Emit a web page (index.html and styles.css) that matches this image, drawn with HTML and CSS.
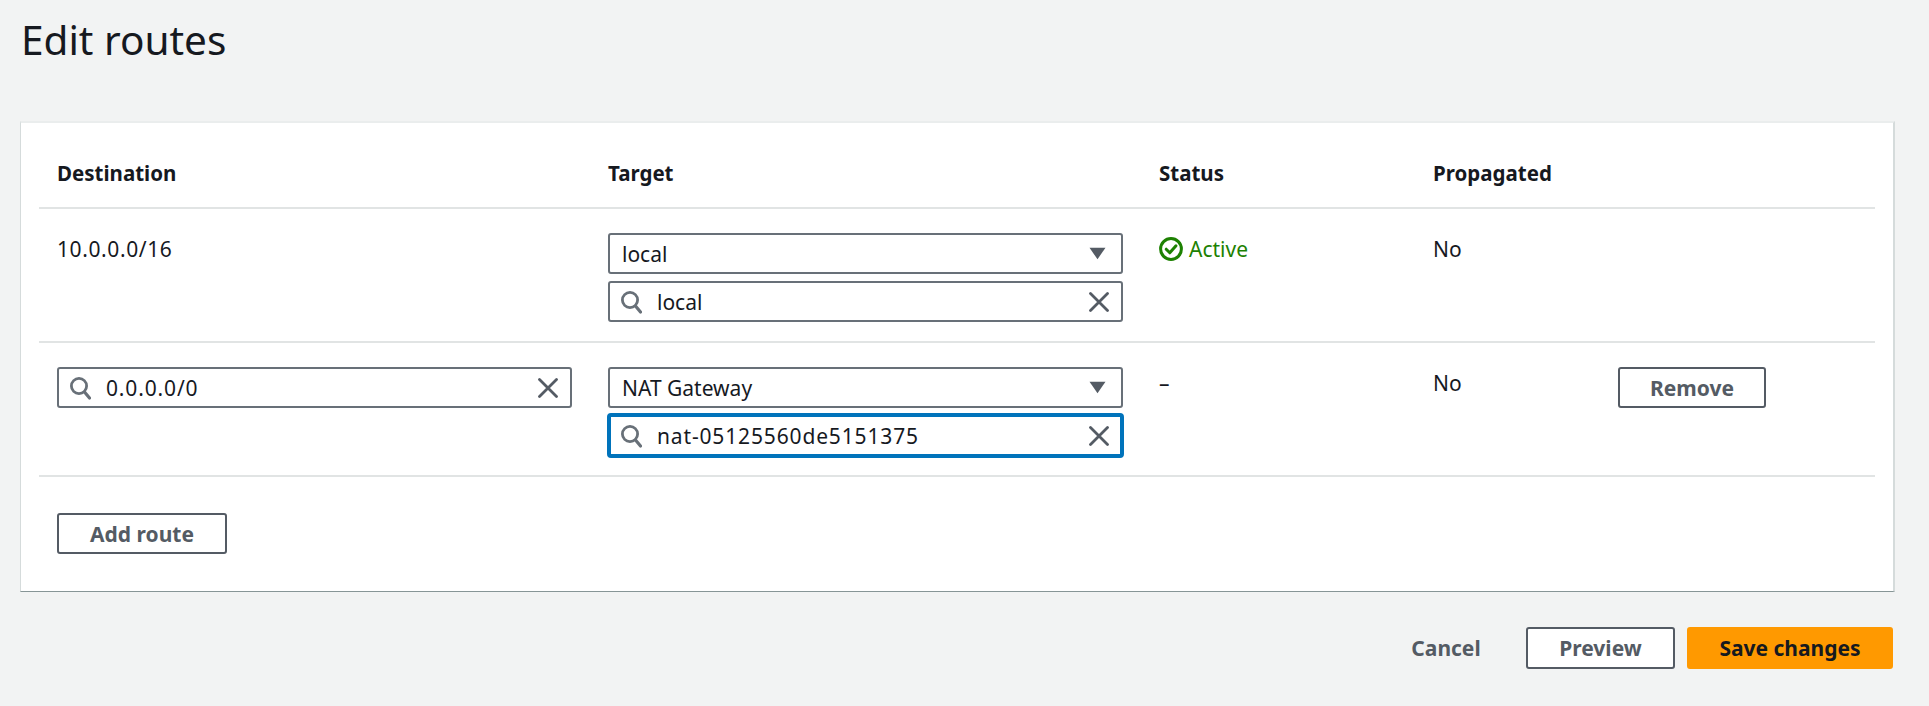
FILE: index.html
```html
<!DOCTYPE html>
<html lang="en">
<head>
<meta charset="utf-8">
<title>Edit routes</title>
<link rel="stylesheet" href="styles.css">
</head>
<body>
<svg class="defs" width="0" height="0" aria-hidden="true">
  <symbol id="i-search" viewBox="0 0 22 24"><circle cx="10" cy="10" r="7.6" fill="none" stroke="currentColor" stroke-width="2.8"/><path d="M15.5 16 L20.5 22" fill="none" stroke="currentColor" stroke-width="3.2" stroke-linecap="round"/></symbol>
  <symbol id="i-close" viewBox="0 0 20 20"><path d="M1.5 1.5 L18.5 18.5 M18.5 1.5 L1.5 18.5" fill="none" stroke="currentColor" stroke-width="2.8" stroke-linecap="round"/></symbol>
  <symbol id="i-caret" viewBox="0 0 16 12"><path d="M0.5 0.5 H15.5 L8 11.5 Z" fill="currentColor"/></symbol>
  <symbol id="i-check" viewBox="0 0 24 24"><circle cx="12" cy="12" r="10.4" fill="none" stroke="currentColor" stroke-width="3"/><path d="M7.2 12.2 L10.8 15.8 L17 8.8" fill="none" stroke="currentColor" stroke-width="3" stroke-linecap="round" stroke-linejoin="round"/></symbol>
</svg>
<main class="page">
  <h1 class="title">Edit routes</h1>
  <section class="card">
    <div class="row head">
      <div class="cell">Destination</div>
      <div class="cell">Target</div>
      <div class="cell">Status</div>
      <div class="cell">Propagated</div>
      <div class="cell"></div>
    </div>
    <div class="row">
      <div class="cell text"><span class="num">10.0.0.0/16</span></div>
      <div class="cell stack">
        <div class="field select"><span class="value">local</span><svg class="caret"><use href="#i-caret"/></svg></div>
        <div class="field"><svg class="search"><use href="#i-search"/></svg><span class="value">local</span><svg class="close"><use href="#i-close"/></svg></div>
      </div>
      <div class="cell text status"><svg class="check"><use href="#i-check"/></svg>Active</div>
      <div class="cell text">No</div>
      <div class="cell"></div>
    </div>
    <div class="row">
      <div class="cell">
        <div class="field"><svg class="search"><use href="#i-search"/></svg><span class="value wide">0.0.0.0/0</span><svg class="close"><use href="#i-close"/></svg></div>
      </div>
      <div class="cell stack">
        <div class="field select"><span class="value">NAT Gateway</span><svg class="caret"><use href="#i-caret"/></svg></div>
        <div class="field focused"><svg class="search"><use href="#i-search"/></svg><span class="value wide">nat-05125560de5151375</span><svg class="close"><use href="#i-close"/></svg></div>
      </div>
      <div class="cell text">–</div>
      <div class="cell text">No</div>
      <div class="cell"><button class="btn remove" type="button">Remove</button></div>
    </div>
    <div class="add"><button class="btn add-route" type="button">Add route</button></div>
  </section>
  <footer class="actions">
    <button class="btn link" type="button">Cancel</button>
    <button class="btn preview" type="button">Preview</button>
    <button class="btn primary" type="button">Save changes</button>
  </footer>
</main>
</body>
</html>
```
FILE: styles.css
```css
* { box-sizing: border-box; }
html, body { margin: 0; height: 100%; }
body {
  background: #f2f3f3;
  color: #16191f;
  font-family: "Noto Sans", "Liberation Sans", sans-serif;
  font-size: 21px;
  overflow: hidden;
}
.defs { display: block; height: 0; }
.page { padding: 0 34px 0 20px; }
.title {
  margin: 0;
  padding: 16px 0 0 1px;
  height: 121px;
  font-size: 40.5px;
  font-weight: 400;
  line-height: 48px;
}
.card {
  background: #fff;
  height: 471px;
  padding: 0 18px 0 18px;
  border: 1px solid #d5dbdb;
  border-top: 2px solid #eaeded;
  border-right-width: 2px;
  border-bottom-color: #879596;
}
.row {
  display: grid;
  grid-template-columns: 550px 551px 274px 185px 1fr;
  height: 134px;
  border-bottom: 2px solid #e1e4e4;
}
.head {
  height: 86px;
  align-items: start;
  font-size: 20.5px;
  font-weight: 700;
  line-height: 24px;
}
.head .cell { padding-top: 38px; }
.cell { padding: 24px 0 0 19px; }
.cell:first-child { padding-left: 18px; }
.text { padding-top: 28px; line-height: 24px; }
.num { letter-spacing: 0.6px; }
.wide { letter-spacing: 0.85px; }
.stack { display: flex; flex-direction: column; gap: 7px; }
.field {
  display: flex;
  align-items: center;
  width: 515px;
  height: 41px;
  padding: 0 12px 0 10px;
  background: #fff;
  border: 2px solid #687078;
  border-radius: 3px;
  line-height: 24px;
}
.select { padding: 0 12px; }
.value { flex: 1; white-space: nowrap; }
.search { width: 22px; height: 24px; margin-right: 15px; color: #687078; flex: none; }
.close { width: 20px; height: 20px; color: #545b64; flex: none; }
.caret { width: 17px; height: 13px; margin-right: 3px; color: #545b64; flex: none; }
.focused {
  height: 45px;
  width: 517px;
  margin: -2px 0 0 -1px;
  padding: 0 11px 0 9px;
  border: 4px solid #0073bb;
  border-radius: 4px;
}
.status {
  display: flex;
  align-items: flex-start;
  gap: 6px;
  color: #1d8102;
}
.check { width: 24px; height: 24px; flex: none; }
.btn {
  display: inline-flex;
  align-items: center;
  justify-content: center;
  height: 41px;
  padding: 0;
  background: #fff;
  border: 2px solid #545b64;
  border-radius: 3px;
  color: #545b64;
  font: 700 21px/24px "Noto Sans", "Liberation Sans", sans-serif;
}
.remove { width: 148px; }
.add { padding: 36px 0 0 18px; }
.add-route { width: 170px; }
.actions {
  display: flex;
  justify-content: flex-end;
  align-items: center;
  margin-top: 35px;
  padding-right: 2px;
}
.link { width: 72px; margin-right: 44px; background: none; border: 0; }
.preview { width: 149px; height: 42px; margin-right: 12px; }
.primary { width: 206px; height: 42px; background: #ff9900; border-color: #ff9900; color: #16191f; }
```
